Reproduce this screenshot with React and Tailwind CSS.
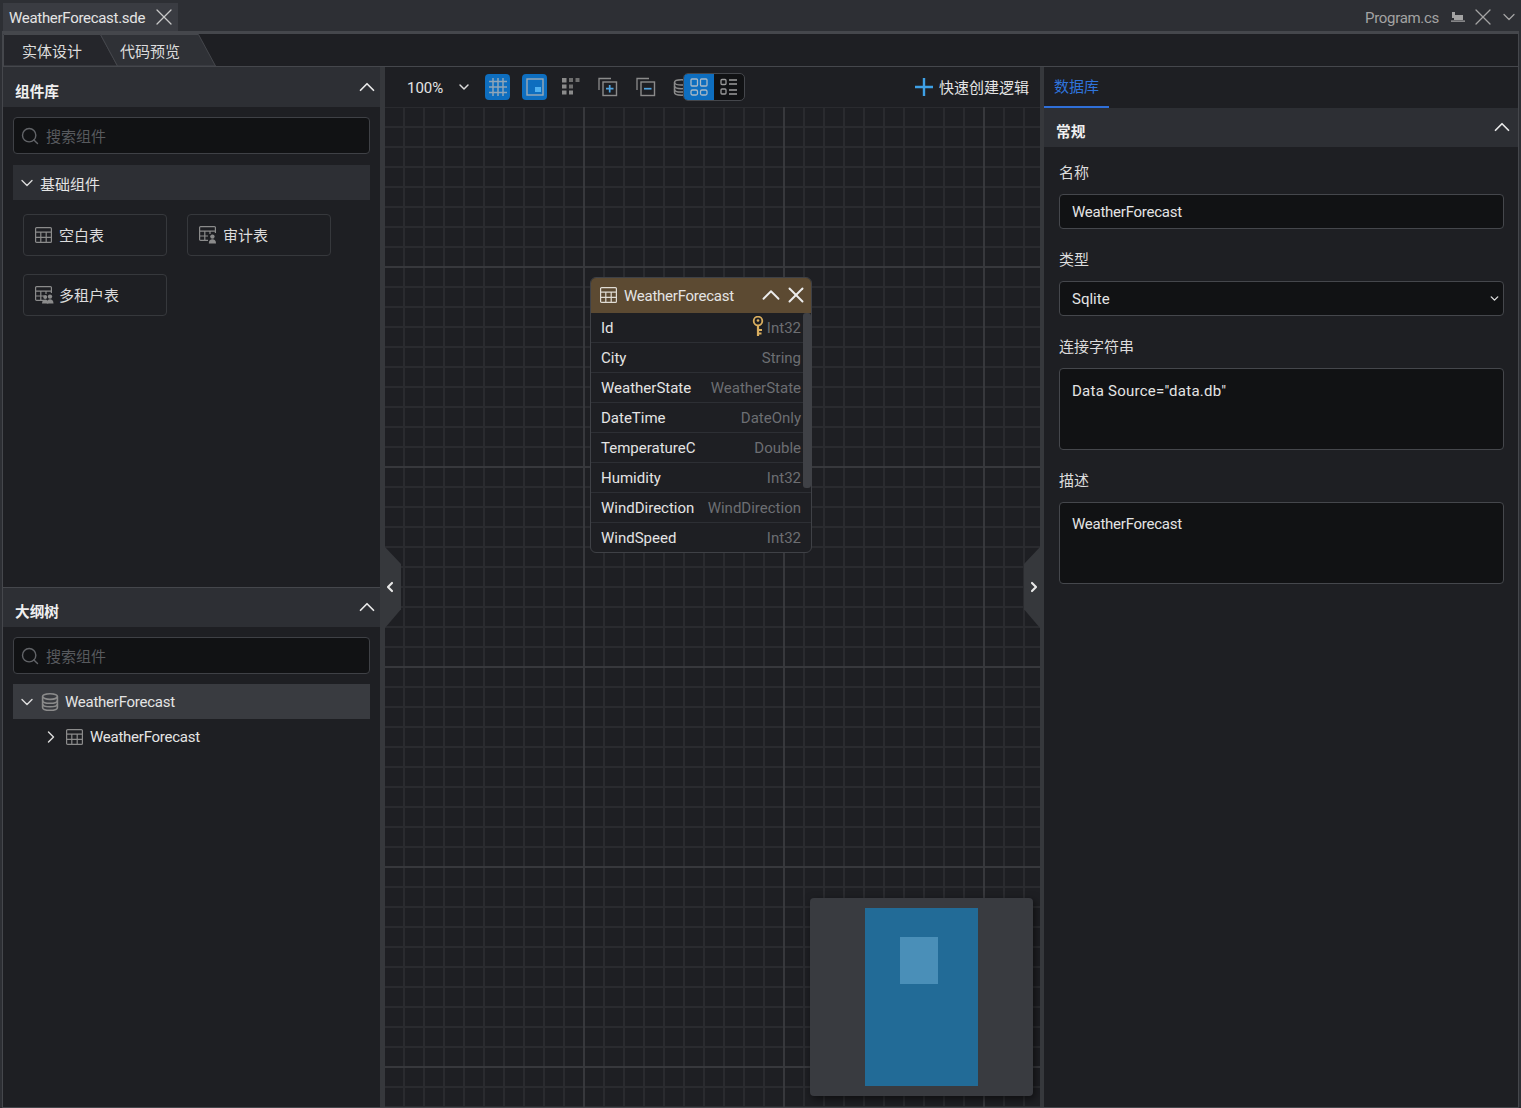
import React from "react";
import { ChevronUp, ChevronDown, ChevronRight, ChevronLeft, X, Search } from "lucide-react";

const TableIcon = ({ className = "", color = "#8b8b8b" }) => (
  <svg width="17" height="16" viewBox="0 0 17 16" fill="none" stroke={color} strokeWidth="1.2" className={`shrink-0 ${className}`}>
    <rect x="0.6" y="0.6" width="15.8" height="14.8" rx="1" />
    <path d="M0.6 5.2H16.4M0.6 10.3H16.4M5.8 5.2V15.4M11.2 5.2V15.4" />
  </svg>
);

const PersonTableIcon = ({ two }) => (
  <svg width="19" height="18" viewBox="0 0 19 18" fill="none" className="shrink-0">
    <path d="M9 14.4H1.6a1 1 0 0 1-1-1V1.6a1 1 0 0 1 1-1h13.8a1 1 0 0 1 1 1V7" stroke="#8b8b8b" strokeWidth="1.2" />
    <path d="M0.6 5.2H16.4M0.6 10H9M5.8 5.2V14.4M11 5.2V8" stroke="#8b8b8b" strokeWidth="1.2" />
    {two && <circle cx="10.2" cy="11" r="2" fill="#8b8b8b" />}
    {two && <path d="M7 17.6c0-2.8 1.5-4 3.2-4s3.200 1.200 3.200 4z" fill="#8b8b8b" />}
    <circle cx={two ? 15 : 13.4} cy="10.6" r="2.2" fill="#8b8b8b" />
    <path d={two ? "M11.800 17.600c0-3 1.400-4.300 3.200-4.300s3.500 1.300 3.500 4.300z" : "M9.800 17.600c0-3 1.500-4.300 3.600-4.300s3.600 1.300 3.600 4.300z"} fill="#8b8b8b" />
  </svg>
);

const DbIcon = ({ size = 18 }) => (
  <svg width={size} height={size} viewBox="0 0 18 18" fill="none" stroke="#8b8b8b" strokeWidth="1.6" className="shrink-0">
    <ellipse cx="9" cy="3.600" rx="7.400" ry="2.800" />
    <path d="M1.600 3.600V14.400C1.600 16 4.900 17.200 9 17.200S16.400 16 16.400 14.400V3.600" />
    <path d="M1.600 7.400C1.600 9 4.900 10.200 9 10.200S16.400 9 16.400 7.400M1.600 11C1.600 12.600 4.900 13.800 9 13.800S16.400 12.600 16.400 11" />
  </svg>
);

const SectionHeader = ({ title, className = "", textClass = "pt-[9px]" }) => (
  <div className={`h-10 shrink-0 bg-[#2d2f34] flex items-center justify-between pl-3 pr-0 ${className}`}>
    <span className={`text-[14.67px] font-bold text-[#f0f0f0] ${textClass}`}>{title}</span>
    <ChevronUp size={26} strokeWidth={1.600} color="#e8e8e8" className="mb-[1px]" />
  </div>
);

const SearchBox = () => (
  <div className="h-[37px] mx-[10px] mt-[10px] rounded-[4px] border border-[#3f4146] bg-[#111214] flex items-center pl-[6px] gap-[6px]">
    <Search size={20} strokeWidth={1.700} color="#626468" />
    <span className="text-[#585a5e] text-[15px] pt-[3px]">搜索组件</span>
  </div>
);

const ComponentButton = ({ icon, label, gap = "gap-[7px]" }) => (
  <div className={`w-36 h-[42px] rounded-[4px] border border-[#36383c] flex items-center pl-[11px] ${gap} text-[15px] text-[#dcdcdc]`}>
    {icon}
    <span className="pt-[2px]">{label}</span>
  </div>
);

const fields = [
  ["Id", "Int32", true],
  ["City", "String"],
  ["WeatherState", "WeatherState"],
  ["DateTime", "DateOnly"],
  ["TemperatureC", "Double"],
  ["Humidity", "Int32"],
  ["WindDirection", "WindDirection"],
  ["WindSpeed", "Int32"],
];

const KeyIcon = () => (
  <svg width="14" height="21" viewBox="0 0 14 21" fill="none" className="mr-[2px] shrink-0 -translate-y-[1px]">
    <circle cx="7" cy="5" r="4.300" stroke="#d9ae5f" strokeWidth="1.800" />
    <circle cx="7" cy="4.500" r="1.300" fill="#d9ae5f" />
    <path d="M7 9V20M7 14H11M7 17.500H10.500" stroke="#d9ae5f" strokeWidth="2.200" />
  </svg>
);

const Field = ({ label, children }) => (
  <div className="flex flex-col">
    <label className="h-[21px] mb-[11px] text-[15px] leading-[23px] text-[#dcdcdc]">{label}</label>
    {children}
  </div>
);

const inputClass = "w-full rounded-[4px] border border-[#45474c] bg-[#111214] text-[15px] text-[#e4e4e4] outline-none";

const TabShape = ({ points, fill }) => (
  <svg width="116" height="32" viewBox="0 0 116 32" className="absolute left-0 top-0">
    <polygon points={points} fill={fill} stroke="#45474c" strokeWidth="1" />
  </svg>
);

const Toggle = () => (
  <div className="absolute left-[298px] top-[6px] w-[62px] h-[28px] rounded-[5px] border border-[#45474c] bg-[#111214] flex overflow-hidden">
    <div className="w-[30px] bg-[#0e6ebf] flex items-center justify-center">
      <svg width="18" height="18" viewBox="0 0 18 18" fill="none" stroke="#a9b8c6" strokeWidth="1.300">
        <rect x="1" y="1" width="6.500" height="7" rx="1" />
        <rect x="10.500" y="1" width="6.500" height="7" rx="1" />
        <rect x="1" y="12" width="6.500" height="5" rx="1.500" />
        <rect x="10.500" y="12" width="6.500" height="5" rx="1.500" />
      </svg>
    </div>
    <div className="flex-1 flex items-center justify-center">
      <svg width="18" height="18" viewBox="0 0 18 18" fill="none" stroke="#9a9a9a" strokeWidth="1.300">
        <rect x="1" y="1.500" width="5" height="5" rx="1" />
        <rect x="1" y="11" width="5" height="5" rx="1" />
        <path d="M9 2H17M9 6H17M9 12H17M9 16H17" />
      </svg>
    </div>
  </div>
);

export default function App() {
  return (
    <div className="w-screen h-screen overflow-hidden bg-[#2d2f34] flex flex-col text-[15px] text-[#e4e4e4] [font-family:'Roboto','Noto_Sans_CJK_SC',sans-serif]">
      {/* title bar */}
      <div className="h-[31px] shrink-0 flex items-end justify-between pl-[3px] pr-[2px]">
        <div className="h-7 w-[175px] bg-[#3a3c42] flex items-center justify-between pl-[6px] pr-0">
          <span className="text-[15px] text-[#e4e4e4] tracking-[-0.3px] pt-[2px]">WeatherForecast.sde</span>
          <X size={28} strokeWidth={1.100} color="#c8c8c8" />
        </div>
        <div className="h-7 flex items-center text-[#a3a3a3]">
          <span className="text-[15px] tracking-[-0.3px] pt-[2px]">Program.cs</span>
          <svg width="14" height="12" viewBox="0 0 14 12" fill="#a3a3a3" className="ml-[12px]">
            <path d="M1 1h3v3h8v5H3v-2H1zM0 9.500h14v1.200H0z" />
          </svg>
          <X size={28} strokeWidth={1.100} color="#a3a3a3" className="ml-[4px]" />
          <ChevronDown size={20} strokeWidth={1.500} color="#a3a3a3" className="ml-[2px]" />
        </div>
      </div>

      {/* body frame */}
      <div className="flex-1 min-h-0 mx-[2px] border-x border-b border-[#45474c] bg-[#1e1f23] flex flex-col">
        <div className="h-[3px] shrink-0 bg-[#45474c]" />

        {/* doc tabs */}
        <div className="h-[33px] shrink-0 border-b border-[#45474c] flex">
          <div className="relative w-[97px] h-8 shrink-0">
            <TabShape points="0.5,0.5 97.500,0.500 114.500,32 0.500,32" fill="#25262b" />
            <span className="absolute left-[19px] top-[7px] text-[15px] text-[#dcdcdc]">实体设计</span>
          </div>
          <div className="relative w-[115px] h-8 shrink-0">
            <TabShape points="0.5,0.5 98.500,0.500 115.500,32 17.500,32" fill="#2f3136" />
            <span className="absolute left-[20px] top-[7px] text-[15px] text-[#dcdcdc]">代码预览</span>
          </div>
        </div>

        {/* columns */}
        <div className="flex-1 min-h-0 flex">
          {/* left */}
          <aside className="w-[377px] shrink-0 flex flex-col">
            <div className="h-[520px] shrink-0 flex flex-col">
              <SectionHeader title="组件库" />
              <SearchBox />
              <div className="h-[35px] mx-[10px] mt-[11px] bg-[#2d2f34] flex items-center pl-[4px]">
                <ChevronDown size={20} strokeWidth={1.600} color="#dcdcdc" />
                <span className="ml-[3px] pt-[5px]">基础组件</span>
              </div>
              <div className="pl-5 pt-[14px] grid grid-cols-[144px_144px] gap-x-5 gap-y-[18px]">
                <ComponentButton icon={<TableIcon />} label="空白表" />
                <ComponentButton icon={<PersonTableIcon />} label="审计表" gap="gap-[5px]" />
                <ComponentButton icon={<PersonTableIcon two />} label="多租户表" gap="gap-[5px]" />
              </div>
            </div>
            <div className="flex-1 border-t border-[#45474c] flex flex-col">
              <SectionHeader title="大纲树" className="!h-[39px]" textClass="pt-[8px]" />
              <SearchBox />
              <div className="h-[35px] mx-[10px] mt-[10px] bg-[#393b40] flex items-center pl-[4px]">
                <ChevronDown size={20} strokeWidth={1.700} color="#dcdcdc" />
                <span className="ml-[4px]"><DbIcon /></span>
                <span className="ml-[6px] tracking-[-0.25px] pt-[2px]">WeatherForecast</span>
              </div>
              <div className="h-[35px] mx-[10px] flex items-center pl-[28px]">
                <ChevronRight size={20} strokeWidth={1.700} color="#dcdcdc" />
                <TableIcon className="ml-[5px]" />
                <span className="ml-[7px] tracking-[-0.25px] pt-[2px]">WeatherForecast</span>
              </div>
            </div>
          </aside>

          <div className="w-[5px] shrink-0 bg-[#36383c]" />

          {/* canvas */}
          <main className="w-[655px] shrink-0 flex flex-col relative">
            <div className="h-10 shrink-0 relative flex items-center pl-[22px] pr-[11px]">
              <span className="text-[15px] w-[49px] pt-[2px]">100%</span>
              <ChevronDown size={16} strokeWidth={2.200} color="#dcdcdc" />
              <div className="ml-[13px] w-[25px] h-[26px] rounded-[4px] bg-[#0e6ebf] flex items-center justify-center">
                <svg width="20" height="20" viewBox="0 0 20 20" stroke="#8fa5b8" strokeWidth="1.500">
                  <path d="M1 4.500H19M1 10H19M1 15.500H19M5 1V19M10 1V19M15 1V19" />
                </svg>
              </div>
              <div className="ml-3 w-[25px] h-[26px] rounded-[4px] bg-[#0e6ebf] flex items-center justify-center">
                <svg width="18" height="18" viewBox="0 0 18 18" fill="none">
                  <rect x="1" y="1" width="16" height="16" stroke="#9aa9b6" strokeWidth="1.400" />
                  <rect x="9" y="9" width="6" height="5" fill="#4fb0f0" />
                </svg>
              </div>
              <svg width="20" height="18" viewBox="0 0 20 18" fill="#8b8b8b" className="ml-[14px] -translate-y-[1px]">
                <rect x="1" y="1" width="4.500" height="4.500" />
                <rect x="8" y="1" width="4" height="4" fill="#6f6f6f" />
                <rect x="14.500" y="1" width="4" height="4" fill="#6f6f6f" />
                <rect x="1" y="7.500" width="4.500" height="4" />
                <rect x="8" y="7.500" width="4" height="4" fill="#6f6f6f" />
                <rect x="1" y="13.500" width="4.500" height="4" />
                <rect x="8" y="13.500" width="4" height="4" />
              </svg>
              <svg width="20" height="20" viewBox="0 0 20 20" fill="none" className="ml-[17px]">
                <path d="M1 13V1.500H13" stroke="#8b8b8b" strokeWidth="1.300" />
                <rect x="5" y="5" width="13.500" height="13.500" stroke="#8b8b8b" strokeWidth="1.400" />
                <path d="M8 11.700H15.500M11.700 8V15.500" stroke="#4fa3e0" strokeWidth="1.700" />
              </svg>
              <svg width="20" height="20" viewBox="0 0 20 20" fill="none" className="ml-[18px]">
                <path d="M1 13V1.500H13" stroke="#8b8b8b" strokeWidth="1.300" />
                <rect x="5" y="5" width="13.500" height="13.500" stroke="#8b8b8b" strokeWidth="1.400" />
                <path d="M8 11.700H15.500" stroke="#4fa3e0" strokeWidth="1.700" />
              </svg>
              <span className="ml-[17px]"><DbIcon size={17} /></span>
              <div className="ml-auto flex items-center gap-[6px]">
                <svg width="18" height="18" viewBox="0 0 18 18" stroke="#3ea0e6" strokeWidth="2.400">
                  <path d="M0 9H18M9 0V18" />
                </svg>
                <span className="text-[15px] pt-[2px]">快速创建逻辑</span>
              </div>
              <Toggle />
            </div>

            <div className="flex-1 relative bg-[#1e1f23] overflow-hidden bg-[linear-gradient(to_right,#37383c_2px,transparent_2px),linear-gradient(to_bottom,#37383c_2px,transparent_2px),linear-gradient(to_right,#2a2b2f_2px,transparent_2px),linear-gradient(to_bottom,#2a2b2f_2px,transparent_2px)] [background-size:200px_200px,200px_200px,20px_20px,20px_20px] [background-position:198px_0,0_159px,18px_0,0_-1px]">
              {/* entity node */}
              <div className="absolute left-[205px] top-[170px] w-[222px] h-[276px] rounded-[6px] border border-[#3f4146] bg-[#1e1f23] overflow-hidden">
                <div className="h-[35px] bg-[#5c4a32] flex items-center pl-[9px] pr-0">
                  <TableIcon color="#e0dcd4" className="-translate-y-[1px]" />
                  <span className="ml-[7px] flex-1 tracking-[-0.25px] pt-[2px]">WeatherForecast</span>
                  <ChevronUp size={30} strokeWidth={1.500} color="#ececec" className="-translate-y-[1px]" />
                  <X size={26} strokeWidth={1.800} color="#ececec" className="ml-[-3px] mr-[2px] -translate-y-[1px]" />
                </div>
                <div className="relative">
                  {fields.map(([name, type, pk]) => (
                    <div key={name} className="h-[30px] border-b border-[#2d2f34] flex items-center justify-between pl-[10px] pr-[10px]">
                      <span className="text-[#e4e4e4] pt-[2px]">{name}</span>
                      <span className="flex items-center text-[#6c6e72]">{pk && <KeyIcon />}<span className="pt-[2px]">{type}</span></span>
                    </div>
                  ))}
                  <div className="absolute right-0 top-0 w-[8px] h-[175px] rounded-[3px] bg-[#3f4146]" />
                </div>
              </div>

              {/* minimap */}
              <div className="absolute left-[425px] top-[791px] w-[223px] h-[198px] rounded-[4px] bg-[#393b40] shadow-[2px_3px_8px_rgba(0,0,0,0.55)] flex justify-center pt-[10px]">
                <div className="relative w-[113px] h-[178px] bg-[#226b97]">
                  <div className="absolute left-[35px] top-[29px] w-[38px] h-[47px] bg-[#4a8fb8]" />
                </div>
              </div>
            </div>

            {/* collapse handles */}
            <div className="absolute left-0 top-[480px] w-4 h-[81px] bg-[#36383c] [clip-path:polygon(0_0,100%_21%,100%_77%,0_100%)] flex items-center justify-center">
              <ChevronLeft size={20} strokeWidth={3.200} color="#e8e8e8" className="-translate-x-[3px] -translate-y-[1px]" />
            </div>
            <div className="absolute right-0 top-[480px] w-4 h-[81px] bg-[#36383c] [clip-path:polygon(100%_0,0_21%,0_77%,100%_100%)] flex items-center justify-center">
              <ChevronRight size={20} strokeWidth={3.200} color="#e8e8e8" className="translate-x-[2px] -translate-y-[1px]" />
            </div>
          </main>

          <div className="w-1 shrink-0 bg-[#36383c]" />

          {/* right */}
          <aside className="flex-1 min-w-0 flex flex-col">
            <div className="h-[41px] shrink-0 flex items-end">
              <div className="h-[41px] w-[65px] border-b-2 border-[#2f6fd8] flex items-center justify-center text-[#2f74dc] text-[15px] pt-[2px]">数据库</div>
            </div>
            <div className="h-[39px] shrink-0 bg-[#2d2f34] flex items-center justify-between pl-3 pr-[3px]">
              <span className="text-[14.67px] font-bold text-[#f0f0f0] pt-[8px]">常规</span>
              <ChevronUp size={26} strokeWidth={1.600} color="#e8e8e8" className="mb-[2px]" />
            </div>
            <div className="pl-[15px] pr-[14px] pt-[15px] flex flex-col gap-5">
              <Field label="名称">
                <input readOnly value="WeatherForecast" className={`${inputClass} h-[35px] px-3 tracking-[-0.25px]`} />
              </Field>
              <Field label="类型">
                <div className="relative">
                  <select defaultValue="Sqlite" className={`${inputClass} h-[35px] px-3 pt-[2px] appearance-none`}>
                    <option>Sqlite</option>
                  </select>
                  <ChevronDown size={13} strokeWidth={2.600} color="#dcdcdc" className="absolute right-[3px] top-[11px]" />
                </div>
              </Field>
              <Field label="连接字符串">
                <textarea readOnly value={'Data Source="data.db"'} className={`${inputClass} h-[82px] px-3 pt-[11px] resize-none block tracking-[0.25px]`} />
              </Field>
              <Field label="描述">
                <textarea readOnly value="WeatherForecast" className={`${inputClass} h-[82px] px-3 pt-[10px] resize-none block tracking-[-0.25px]`} />
              </Field>
            </div>
          </aside>
        </div>
      </div>
    </div>
  );
}
